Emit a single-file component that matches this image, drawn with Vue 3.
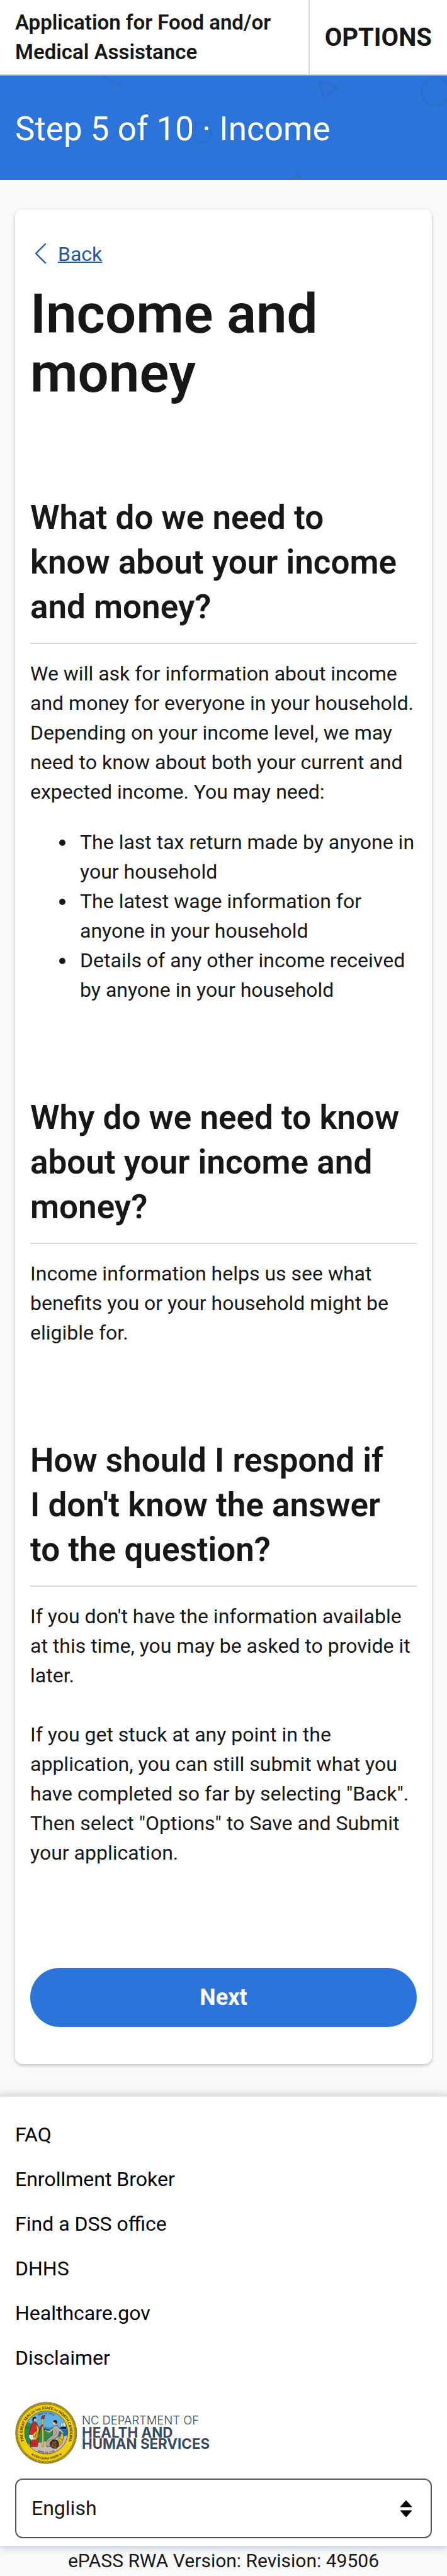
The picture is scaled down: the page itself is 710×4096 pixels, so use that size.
<script setup>
import { ref } from 'vue'

const language = ref('English')
const links = ['FAQ', 'Enrollment Broker', 'Find a DSS office', 'DHHS', 'Healthcare.gov', 'Disclaimer']
const documents = [
  'The last tax return made by anyone in your household',
  'The latest wage information for anyone in your household',
  'Details of any other income received by anyone in your household'
]
</script>

<template>
  <div class="page">
    <header class="top">
      <div class="app-name">Application for Food and/or Medical Assistance</div>
      <button class="options" type="button">OPTIONS</button>
    </header>

    <div class="banner">
      <svg class="shapes" width="710" height="166" viewBox="0 0 710 166" aria-hidden="true">
        <g fill="none" stroke="#2a6fcf" stroke-width="4">
          <path d="M162 0 L193 18" />
          <path d="M508 10 L536 18 L515 35 Z" />
          <circle cx="692" cy="26" r="22" />
          <path d="M312 76 H328 L336 91 L328 106 H312 L304 91 Z" />
        </g>
        <circle cx="474" cy="159" r="5" fill="#2a6fcf" />
      </svg>
      <div class="step">Step 5 of 10 · Income</div>
    </div>

    <main class="main">
      <div class="card">
        <a class="back" href="#">
          <svg class="chevron" width="20" height="34" viewBox="0 0 20 34" aria-hidden="true">
            <path d="M18 2 L3 17 L18 32" fill="none" stroke="#1f57a4" stroke-width="2.4" stroke-linecap="round" stroke-linejoin="round" />
          </svg>
          <span class="back-label">Back</span>
        </a>
        <h1>Income and money</h1>

        <section>
          <h2>What do we need to <br>know about your income and money?</h2>
          <p>We will ask for information about income and money for everyone in your household. Depending on your income level, we may need to know about both your current and expected income. You may need:</p>
          <ul class="documents">
            <li v-for="item in documents" :key="item">{{ item }}</li>
          </ul>
        </section>

        <section>
          <h2>Why do we need to know about your income and money?</h2>
          <p>Income information helps us see what benefits you or your household might be eligible for.</p>
        </section>

        <section>
          <h2>How should I respond if <br>I don't know the answer <br>to the question?</h2>
          <p>If you don't have the information available at this time, you may be asked to provide it later.</p>
          <p class="follow">If you get stuck at any point in the application, you can still submit what you have completed so far by selecting "Back". Then select "Options" to Save and Submit your application.</p>
        </section>

        <button class="next" type="button">Next</button>
      </div>
    </main>

    <footer class="footer">
      <nav class="links" aria-label="Footer">
        <a v-for="link in links" :key="link" href="#">{{ link }}</a>
      </nav>
      <svg class="logo" width="312" height="99" viewBox="0 0 474 150" role="img" aria-label="NC Department of Health and Human Services">
        <defs>
          <clipPath id="seal-scene"><circle cx="75" cy="74" r="52" /></clipPath>
          <path id="seal-upper" d="M33 113.5 A57 57 0 1 1 117 113.5" />
          <path id="seal-date" d="M38 49 A45 45 0 0 1 112 49" />
          <path id="seal-lower-date" d="M41 111 A49.5 49.5 0 0 0 109 111" />
          <path id="seal-motto" d="M28 118.4 A64 64 0 0 0 122 118.4" />
        </defs>
        <circle cx="75" cy="75" r="74" fill="#d6b71a" stroke="#5b5120" stroke-width="1" />
        <circle cx="75" cy="75" r="71.5" fill="none" stroke="#5b5120" stroke-width="3" stroke-dasharray="1.2 1.6" />
        <circle cx="75" cy="75" r="69" fill="#f0cd13" stroke="#5b5120" stroke-width="0.8" />
        <g clip-path="url(#seal-scene)">
          <rect x="22" y="20" width="106" height="110" fill="#5fb1e3" />
          <path d="M70 62 H128 V84 H70 Z" fill="#1769b5" />
          <path d="M70 64 H100 M82 67 H128 M74 70 H108" stroke="#5fb1e3" stroke-width="1" />
          <path d="M22 55 Q33 46 43 58 L64 66 Q84 68 96 77 L82 96 L50 112 H22 Z" fill="#2a8c4a" stroke="#174b2b" stroke-width="0.8" />
          <path d="M22 64 Q34 60 44 66" fill="none" stroke="#174b2b" />
          <path d="M20 106 Q40 100 62 98 L88 92 L128 80 V130 H20 Z" fill="#c6bcb2" />
          <path d="M110 60 L124 60 L122 65 H112 Z" fill="#1d1d1d" />
          <path d="M111 52 H115 V59 H111 Z M116 50 H120 V59 H116 Z M121 52 H124 V59 H121 Z" fill="#fff" stroke="#333" stroke-width="0.5" />
        </g>
        <circle cx="75" cy="74" r="52" fill="none" stroke="#4d481f" stroke-width="1.2" />
        <path d="M65 42 H69 V108 H65 Z" fill="#f0cd13" stroke="#5b5120" stroke-width="0.8" />
        <path d="M63 40 Q63 34 71 32 L70 40 Z" fill="#d9252a" stroke="#3b1515" />
        <circle cx="47" cy="42" r="4" fill="#e7bf9c" />
        <path d="M42 47 Q40 37 47 36 Q51 36 51 40 L46 41 L44 49 Z" fill="#221a17" />
        <path d="M41 51 Q47 46 52 51 L58 63 L66 54 L67 57 L59 68 L55 96 L54 108 H37 L37 90 L35 72 Z" fill="#d9252a" stroke="#351a17" stroke-width="1" />
        <path d="M50 51 L58 64 L57 84 L50 92 L37 95 L41 80 L52 68 Z" fill="#e3ba25" stroke="#443715" stroke-width="1.2" />
        <path d="M46 82 L40 94 M53 66 L48 86 M56 72 L52 89 M41 98 V108 M47 97 V108" stroke="#3d2717" fill="none" />
        <path d="M34 79 L43 80 L46 90 L38 92 L33 85 Z" fill="#fff" stroke="#333" stroke-width="0.8" />
        <path d="M36 83 L42 84 M37 87 L43 87" stroke="#555" stroke-width="0.7" />
        <circle cx="96" cy="51" r="5" fill="#e7bf9c" />
        <path d="M92 49 Q92 44 98 44 Q103 46 101 52 L98 54 L97 49 Z" fill="#221a17" />
        <path d="M91 59 L102 57 L109 67 L104 82 L96 90 L86 108 L76 109 L77 91 L90 81 Z" fill="#b7aba2" stroke="#37322e" stroke-width="1" />
        <path d="M91 66 L83 73 L72 69 M107 66 L116 76" fill="none" stroke="#e7bf9c" stroke-width="3" />
        <path d="M94 66 L101 74 L91 84 M80 94 L99 86 M82 100 L93 91 M80 106 L85 102" fill="none" stroke="#55504b" />
        <path d="M69 69 L68 60 M71 68 L74 60 M71 69 L78 65 M72 71 L78 70" stroke="#1f2a20" stroke-width="1" />
        <path d="M114 75 L117 80 Q116 107 98 110 L89 98 Q107 96 111 76 Z" fill="#e3ba25" stroke="#44380f" stroke-width="1" />
        <path d="M104 94 L111 98 M108 89 L115 92 M100 98 L105 105" stroke="#44380f" />
        <circle cx="95" cy="102" r="10" fill="#4f321d" stroke="#231a14" stroke-width="2" />
        <g fill="#d9252a"><circle cx="92" cy="99" r="2.5" /><circle cx="98" cy="104" r="2.5" /><circle cx="90" cy="108" r="2.5" /><circle cx="99" cy="112" r="2" /></g>
        <g fill="#2a8c4a"><circle cx="97" cy="97" r="2.5" /><circle cx="91" cy="104" r="2.5" /><circle cx="96" cy="109" r="2.5" /></g>
        <g class="seal-text">
          <text font-size="9"><textPath href="#seal-upper" startOffset="50%" text-anchor="middle">THE GREAT SEAL <tspan font-size="7">OF THE</tspan> STATE <tspan font-size="7">OF</tspan> NORTH CAROLINA</textPath></text>
          <text font-size="6"><textPath href="#seal-date" startOffset="50%" text-anchor="middle">MAY 20, 1775</textPath></text>
          <text font-size="6"><textPath href="#seal-lower-date" startOffset="50%" text-anchor="middle">APRIL 12, 1776</textPath></text>
          <text font-size="7"><textPath href="#seal-motto" startOffset="50%" text-anchor="middle">★ ESSE QUAM VIDERI ★</textPath></text>
        </g>
        <g class="logo-text">
          <text x="161" y="54" font-size="28" font-weight="300">NC DEPARTMENT OF</text>
          <text x="161" y="86" font-size="34" font-weight="700">HEALTH AND</text>
          <text x="161" y="114" font-size="34" font-weight="700">HUMAN SERVICES</text>
        </g>
      </svg>
      <div class="language">
        <select v-model="language" aria-label="Language">
          <option>English</option>
          <option>Español</option>
        </select>
        <svg class="arrows" width="20" height="28" viewBox="0 0 20 28" aria-hidden="true">
          <path d="M10 1 L19 11 H1 Z M10 27 L19 17 H1 Z" fill="#000" stroke="#000" stroke-linejoin="round" />
        </svg>
      </div>
    </footer>
    <div class="version">ePASS RWA Version: Revision: 49506</div>
  </div>
</template>

<style>
body {
  margin: 0;
  background: #f9f9f9;
}
</style>

<style scoped>
.page {
  font-family: Roboto, "Liberation Sans", sans-serif;
  font-size: 32px;
  line-height: 47px;
  color: #171717;
}
.top {
  display: flex;
  background: #fff;
  border-bottom: 2px solid #d0dada;
}
.app-name {
  flex: 1;
  padding: 12px 24px;
  font-size: 33px;
  font-weight: 600;
}
.options {
  border: 0;
  border-left: 2px solid #d0dada;
  background: none;
  padding: 0 24px;
  font: inherit;
  font-size: 40px;
  font-weight: 700;
  color: inherit;
}
.banner {
  position: relative;
  overflow: hidden;
  padding: 50px 24px 45px;
  background: #2d74da;
  color: #fff;
}
.shapes {
  position: absolute;
  top: 0;
  left: 0;
}
.step {
  position: relative;
  font-size: 53px;
  line-height: 71px;
}
.main {
  padding: 47px 24px 48px;
}
.card {
  padding: 48px 24px 59px;
  background: #fff;
  border-radius: 12px;
  box-shadow: 0 2px 5px rgba(0, 0, 0, 0.25);
}
.back {
  display: flex;
  align-items: center;
  gap: 18px;
  padding-left: 6px;
  color: #1f57a4;
  text-decoration: none;
}
.chevron {
  margin-bottom: 4px;
}
.back-label {
  text-decoration: underline;
  text-decoration-thickness: 2px;
}
h1 {
  margin: 24px 0 148px;
  font-size: 87px;
  line-height: 94px;
  font-weight: 600;
}
h2 {
  margin: 0 0 24px;
  padding-bottom: 21px;
  border-bottom: 2px solid #d0dada;
  font-size: 53px;
  line-height: 71px;
  font-weight: 600;
}
section + section {
  margin-top: 144px;
}
p {
  margin: 0;
}
.follow {
  margin-top: 47px;
}
.documents {
  margin: 33px 0 0;
  padding-left: 73px;
}
.documents li {
  padding-left: 6px;
}
.next {
  display: block;
  width: 100%;
  height: 94px;
  margin-top: 159px;
  border: 0;
  border-radius: 47px;
  background: #2d74da;
  color: #fff;
  font: inherit;
  font-size: 36px;
  font-weight: 700;
}
.footer {
  position: relative;
  padding: 37px 24px 12px;
  background: #fff;
  border-top: 4px solid #e4e4e4;
  box-shadow: 0 2px 12px rgba(50, 80, 120, 0.35);
}
.links {
  display: flex;
  flex-direction: column;
  align-items: flex-start;
  gap: 24px;
  margin-bottom: 46px;
}
.links a {
  color: #000;
  text-decoration: none;
}
.logo {
  display: block;
  margin-bottom: 23px;
}
.seal-text {
  font-family: Lato, sans-serif;
  font-weight: 700;
  fill: #2b2810;
}
.logo-text {
  font-family: Inter, sans-serif;
  fill: #384a60;
}
.language {
  position: relative;
}
.language select {
  display: block;
  width: 100%;
  height: 95px;
  padding: 0 72px 0 24px;
  border: 2px solid #535b59;
  border-radius: 12px;
  appearance: none;
  background: #fff;
  color: #171717;
  font: inherit;
}
.arrows {
  position: absolute;
  top: 34px;
  right: 31px;
  pointer-events: none;
}
.version {
  font-size: 30px;
  text-align: center;
}
</style>
